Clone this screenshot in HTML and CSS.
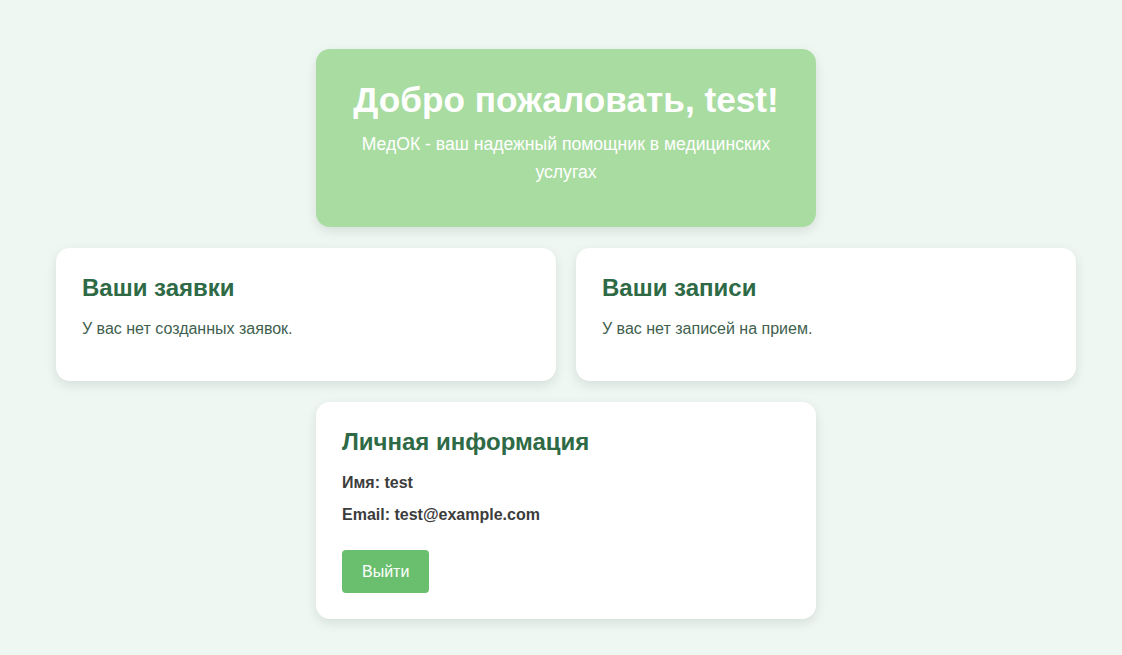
FILE: index.html
```html
<!DOCTYPE html>
<html lang="ru">
<head>
<meta charset="utf-8">
<title>МедОК</title>
<link rel="stylesheet" href="styles.css">
</head>
<body>
<main class="dashboard">
  <section class="card hero wide">
    <h1>Добро пожаловать, test!</h1>
    <p class="subtitle">МедОК - ваш надежный помощник в медицинских услугах</p>
  </section>
  <section class="card">
    <h2>Ваши заявки</h2>
    <p>У вас нет созданных заявок.</p>
  </section>
  <section class="card">
    <h2>Ваши записи</h2>
    <p>У вас нет записей на прием.</p>
  </section>
  <section class="card wide profile">
    <h2>Личная информация</h2>
    <p class="info"><strong>Имя: test</strong></p>
    <p class="info"><strong>Email: test@example.com</strong></p>
    <button class="btn">Выйти</button>
  </section>
</main>
</body>
</html>
```
FILE: styles.css
```css
html, body {
  margin: 0;
  padding: 0;
}
body {
  background: #eef7f2;
  font-family: "Liberation Sans", Arial, sans-serif;
  color: #3f5f4f;
  line-height: 1.6;
}
.dashboard {
  display: grid;
  grid-template-columns: 500px 500px;
  justify-content: center;
  gap: 21px 20px;
  padding: 49px 0 20px 10px;
}
.card {
  box-sizing: border-box;
  width: 500px;
  background: #fff;
  border-radius: 14px;
  padding: 26px 26px 24px;
  box-shadow: 0 4px 12px rgba(0, 0, 0, 0.1);
}
.wide {
  grid-column: 1 / -1;
  justify-self: center;
}
.card.hero {
  background: #a9dca1;
  color: #fff;
  text-align: center;
  padding: 23px 30px 41px;
}
.hero h1 {
  margin: 0 0 2px;
  font-size: 35.2px;
  line-height: 56px;
}
.card .subtitle {
  margin: 0;
  padding: 0 10px;
  font-size: 17.6px;
  line-height: 28px;
}
.card h2 {
  margin: 0 0 13px;
  font-size: 24px;
  color: #2d6a45;
  line-height: 1.2;
}
.card p {
  margin: 0 0 16px;
  font-size: 16px;
}
.card .info {
  color: #3c3c3c;
  margin: 0 0 6px;
}
.btn {
  display: block;
  margin-top: 23px;
  background: #6abf6e;
  color: #fff;
  border: none;
  border-radius: 4px;
  font-family: inherit;
  font-size: 16px;
  line-height: 1.6;
  padding: 8px 20px;
  height: 43px;
  width: 87px;
}
.card.profile {
  padding-bottom: 26px;
}
```
